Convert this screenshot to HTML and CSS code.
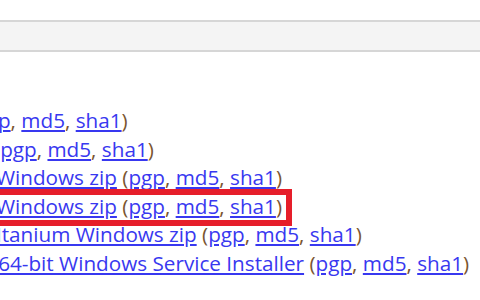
FILE: index.html
```html
<!DOCTYPE html>
<html lang="en">
  <head>
    <meta charset="utf-8" />
    <title>Downloads</title>
    <link rel="stylesheet" href="styles.css">
  </head>
  <body>
    <div class="bar"></div>
    <ul class="downloads">
      <li><a href="#">zip</a> (<a href="#">pgp</a>, <a href="#">md5</a>, <a href="#">sha1</a>)</li>
      <li><a href="#">tar.gz</a> (<a href="#">pgp</a>, <a href="#">md5</a>, <a href="#">sha1</a>)</li>
      <li><a href="#">32-bit Windows zip</a> (<a href="#">pgp</a>, <a href="#">md5</a>, <a href="#">sha1</a>)</li>
      <li class="marked"><a href="#">64-bit Windows zip</a> (<a href="#">pgp</a>, <a href="#">md5</a>, <a href="#">sha1</a>)</li>
      <li><a href="#">64-bit Itanium Windows zip</a> (<a href="#">pgp</a>, <a href="#">md5</a>, <a href="#">sha1</a>)</li>
      <li><a href="#">32-bit/64-bit Windows Service Installer</a> (<a href="#">pgp</a>, <a href="#">md5</a>, <a href="#">sha1</a>)</li>
    </ul>
  </body>
</html>
```

FILE: styles.css
```css
html {
  background: #fff;
}
body {
  margin: 0;
  overflow: hidden;
  font-family: "Open Sans", "Noto Sans", sans-serif;
  font-size: 20.7px;
  color: #7a5530;
}

.bar {
  margin-top: 20px;
  height: 28px;
  background: #f4f4f4;
  border-top: 2px solid #d6d6d6;
  border-bottom: 2px solid #d6d6d6;
}

.downloads {
  list-style: none;
  margin: 54px 0 0 -65px;
  padding: 0;
  line-height: 28.6px;
  white-space: nowrap;
}

.downloads a {
  color: #3838f0;
  text-decoration: underline;
}

/* annotation box round the 64-bit row */
.marked {
  position: relative;
}
.marked::after {
  content: "";
  position: absolute;
  top: -3px;
  bottom: -6px;
  left: -20px;
  width: 377px;
  box-sizing: border-box;
  border: 6px solid #e61e2a;
}
```
